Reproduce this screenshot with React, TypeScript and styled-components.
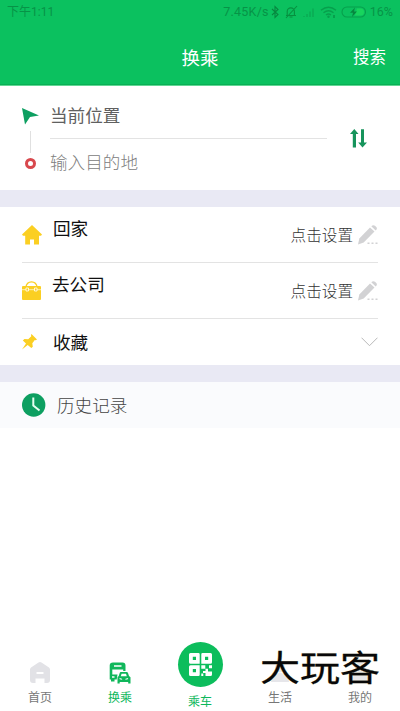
import type { ReactNode } from 'react';
import styled, { createGlobalStyle } from 'styled-components';

const GlobalStyle = createGlobalStyle`
  * {
    box-sizing: border-box;
  }
  body {
    margin: 0;
    background: #fff;
    font-family: Roboto, 'Noto Sans CJK SC', sans-serif;
  }
`;

const Screen = styled.div`
  display: flex;
  flex-direction: column;
  width: 400px;
  height: 711px;
  overflow: hidden;
  background: #fff;
`;

const Header = styled.header`
  height: 86px;
  background: #0bc15f;
  border-bottom: 1px solid #62d794;
  box-shadow: inset 0 -1px 0 #0aaf55;
`;

const StatusBar = styled.div`
  display: flex;
  align-items: center;
  justify-content: space-between;
  height: 24px;
  padding: 0 7px 0 7px;
  font-size: 12px;
  line-height: 24px;
  color: #079347;
`;

const StatusGroup = styled.div`
  display: flex;
  align-items: center;
`;

const Speed = styled.span`
  font-size: 12.5px;
  letter-spacing: 0.25px;
`;

const Percent = styled.span`
  margin-left: 3px;
  font-size: 12.5px;
`;

const TitleBar = styled.div`
  display: grid;
  grid-template-columns: 1fr auto 1fr;
  align-items: center;
  height: 66px;
  padding: 0 14px;
  color: #fff;
`;

const Title = styled.h1`
  grid-column: 2;
  margin: 3px 0 0;
  font-size: 18.5px;
  font-weight: 400;
  line-height: 28px;
`;

const SearchLink = styled.span`
  justify-self: end;
  padding-top: 2px;
  font-size: 16.5px;
  line-height: 26px;
`;

const RoutePanel = styled.section`
  display: flex;
  height: 104px;
  padding-left: 21px;
`;

const RouteMarks = styled.div`
  display: flex;
  flex-direction: column;
  align-items: center;
  width: 18px;
  padding-top: 21px;
`;

const MarkLine = styled.i`
  width: 1px;
  height: 22px;
  margin: 6px 0 5px;
  background: #e0e0e0;
`;

const Ring = styled.i`
  width: 11px;
  height: 11px;
  border: 3px solid #d8484d;
  border-radius: 50%;
`;

const RouteFields = styled.div`
  width: 277px;
  margin-left: 11px;
  padding-top: 7px;
`;

const Field = styled.div<{ $placeholder?: boolean }>`
  height: ${(p) => (p.$placeholder ? 48 : 46)}px;
  border-bottom: ${(p) => (p.$placeholder ? 'none' : '1px solid #e3e3e3')};
  font-size: 17.6px;
  font-weight: ${(p) => (p.$placeholder ? 300 : 400)};
  line-height: ${(p) => (p.$placeholder ? 48 : 46)}px;
  color: ${(p) => (p.$placeholder ? '#808080' : '#606060')};
`;

const SwapButton = styled.div`
  margin: 43px 0 0 23px;
`;

const Band = styled.div`
  height: 17px;
  background: #e9e9f4;
`;

const PlaceList = styled.section`
  height: 158px;
  padding: 0 22px;
`;

const PlaceRow = styled.div<{ $height: number; $last?: boolean }>`
  display: flex;
  align-items: center;
  height: ${(p) => p.$height}px;
  border-bottom: ${(p) => (p.$last ? 'none' : '1px solid #e3e3e3')};
`;

const PlaceIcon = styled.span`
  display: flex;
  width: 20px;
`;

const PlaceName = styled.span<{ $raised?: boolean; $gap: number }>`
  flex: 1;
  margin-left: ${(p) => p.$gap}px;
  padding-top: ${(p) => (p.$raised ? 0 : 2)}px;
  padding-bottom: ${(p) => (p.$raised ? 12 : 0)}px;
  font-size: 17.6px;
  line-height: 26px;
  color: #111;
`;

const PlaceHint = styled.span`
  margin-right: 5px;
  padding-top: 3px;
  font-size: 15.6px;
  font-weight: 300;
  line-height: 24px;
  color: #333;
`;

const HistoryBar = styled.section`
  display: flex;
  align-items: center;
  gap: 11px;
  height: 46px;
  padding-left: 22px;
  background: #fafbfd;
  font-size: 17.6px;
  font-weight: 300;
  line-height: 26px;
  color: #444;
`;

const HistoryLabel = styled.span`
  padding-top: 2px;
`;

const TabBar = styled.nav`
  position: relative;
  display: grid;
  grid-template-columns: repeat(5, 1fr);
  height: 71px;
  margin-top: auto;
`;

const Tab = styled.div<{ $active?: boolean }>`
  display: flex;
  flex-direction: column;
  align-items: center;
  justify-content: flex-end;
  padding-bottom: 4px;
  font-size: 12px;
  line-height: 18px;
  color: ${(p) => (p.$active ? '#0db75b' : '#777')};
`;

const TabIcon = styled.span`
  display: flex;
  margin-bottom: 5px;
`;

const ScanTab = styled(Tab)`
  padding-bottom: 0;
`;

const ScanDisc = styled.span`
  display: flex;
  align-items: center;
  justify-content: center;
  width: 45px;
  height: 45px;
  margin-bottom: 6px;
  border-radius: 50%;
  background: #0cbd5c;
`;

const Watermark = styled.span`
  position: absolute;
  top: 6px;
  left: 260px;
  font-size: 40px;
  font-weight: 400;
  line-height: 48px;
  color: #080808;
  transform: scaleY(0.88);
  -webkit-text-stroke: 0.3px #080808;
  text-shadow: 0 0 2px #fff7cf;
`;

const StatusIcons = () => (
  <svg width="98" height="14" viewBox="0 0 98 14" fill="none" stroke="#079f4c" strokeWidth="1.1">
    <path d="M3 4l6 5.500-3 3v-11l3 3L3 10" stroke="#07873f" />
    <path d="M17 10.500h10M18.200 10.500v-4a3.600 3.600 0 0 1 7.200 0v4M20.500 12h3M17 13L28 1" stroke="#07903f" />
    <path d="M35 12v-1M38 12V9M41 12V6.500M44 12V3.500" stroke="#0bab54" strokeWidth="1.500" />
    <path d="M52 5.200q7.500-6 15 0M54.500 7.800q5-4 10 0M57 10q2.500-2 5 0" strokeWidth="1.400" />
    <circle cx="59.500" cy="11.700" r="1.200" fill="#079f4c" stroke="none" />
    <path d="M65 10v3" strokeWidth="2" />
    <path d="M88 3.500h3.500a3.500 3.500 0 0 1 0 7H86z" fill="#18d45d" stroke="none" />
    <rect x="73" y="2" width="23.500" height="10" rx="5" />
    <path d="M86 2.500l-5 5.200h3L83 12l5-5.500h-3z" fill="#07873f" stroke="none" />
  </svg>
);

const HomeIcon = () => (
  <svg width="20" height="20" viewBox="0 0 20 20" fill="#fbcf22">
    <path d="M10 0l10 9.500-1 1.300h-2V19.500h-5v-5H8v5H3.200v-8.700H1L0 9.500z" />
  </svg>
);

const BriefcaseIcon = () => (
  <svg width="19" height="19" viewBox="0 0 19 19">
    <path d="M3.800 6.500C5-1 14-1 15.200 6.500" fill="none" stroke="#fbcf22" strokeWidth="1.400" />
    <path d="M0 6q0-1 1-1h17q1 0 1 1v12q0 1-1 1H1q-1 0-1-1z" fill="#fbcf22" />
    <path d="M0 8.700h4m2.500 0h6m2.500 0h4" stroke="#fff3b8" strokeWidth=".9" />
    <path d="M4 7h2.500v3H4zm8.500 0H15v3h-2.500z" fill="#fbcf22" stroke="#fff" strokeWidth=".8" />
    <path d="M5.800 5q3.700-3 7.400 0z" fill="#fff" />
  </svg>
);

const PinIcon = () => (
  <svg width="15" height="16" viewBox="0 0 15 16" fill="#fbcf22">
    <path d="M9.500 0L15 5.500l-1.200.7-1-.1-2.500 3.100.5 3.500-1.500 1.400L5.700 11 0 15.500 4 9.500.8 6.400l1.700-1.500 3.700.3L9.300 2.300 9 1z" />
  </svg>
);

const PencilIcon = () => (
  <svg width="20" height="20" viewBox="0 0 20 20" fill="#d2d2d4">
    <path d="M0 19.500l1.300-6L12 2.500l4.500 4L5.700 17.500z" />
    <path d="M13.300 1.300q1.700-1.800 3.700-.5l1.500 1.500q1 1.700-.8 3.200z" />
    <path d="M9.500 17.500h2v1.500h-2zm4 0h2v1.500h-2zm4 0h2v1.500h-2z" />
  </svg>
);

const ChevronIcon = () => (
  <svg width="17" height="10" viewBox="0 0 17 10" fill="none" stroke="#b8b8b8">
    <path d="M.5.700l8 8 8-8" />
  </svg>
);

const ClockIcon = () => (
  <svg width="24" height="24" viewBox="0 0 24 24" fill="none">
    <circle cx="11.700" cy="12" r="11.700" fill="#0d9f61" />
    <path d="M11.300 4.500v8l6.200 5" stroke="#e4fff0" strokeWidth="2" />
  </svg>
);

const TabHomeIcon = () => (
  <svg width="22" height="23" viewBox="0 0 22 23">
    <path d="M1 8.500Q1 7.300 2 6.500L9.500 1.500q1.500-1 3 0L20 6.500q1 .8 1 2V19q0 3-3 3h-2.500v-4.500h-9V22H4q-3 0-3-3z" fill="#e2e2e6" />
    <path d="M7.500 12h7" stroke="#fff" strokeWidth="2" />
  </svg>
);

const TransitIcon = () => (
  <svg width="22" height="22" viewBox="0 0 22 22" fill="#10b75b">
    <path
      fillRule="evenodd"
      d="M4 .5h9.500q3 0 3 3V9h-2.300V7.500H3.300v5h5.200l-.8 5H5.500v2H2v-2H.7V3.500q0-3 3.300-3zM5 3.200v1.600h7.500V3.200zM3 14.200v1.500h2.500v-1.500z"
    />
    <path
      fillRule="evenodd"
      d="M11.800 10h6q.8 0 1.200 1l1 3 1.500 1.200V21.500h-2.300V20h-8.500v1.500H8.500v-6.300L9.700 14l1-3q.3-1 1.100-1zM12.600 11.700l-.8 2.500h6l-.8-2.500zM10.500 16l.2 1.300 2.500.5-.2-1zm8.700 0l-2.700.8-.1 1 2.500-.5z"
    />
  </svg>
);

const QrIcon = () => (
  <svg width="23" height="23" viewBox="0 0 23 23" fill="#fff">
    <path
      fillRule="evenodd"
      d="M1.500 0h8q1.200 0 1.200 1.200v9.500H1.500Q0 10.700 0 9.200V1.500Q0 0 1.500 0zM3.800 3.800v3.200H7V3.800zM13.500 0h8Q23 0 23 1.500v7.700q0 1.500-1.500 1.500h-9.200V1.200Q12.300 0 13.500 0zM16 3.800v3.200h3.200V3.800zM1.500 12.300h9.200v9.500q0 1.200-1.200 1.200h-8Q0 23 0 21.500v-7.700q0-1.500 1.500-1.500zM3.800 16v3.200H7V16z"
    />
    <path d="M12.300 12.300h4v3.500h-4zM20 12.300h3v3h-3zM16.500 15.800H19v2.700h4v3q0 1.500-1.500 1.500h-5v-3H14v-2h2.500zM12.300 20.500h2V23h-2z" />
  </svg>
);

const FaintIcon = () => (
  <svg width="22" height="23" viewBox="0 0 22 23" fill="#e6e6ea">
    <circle cx="11" cy="6.500" r="5" />
    <path d="M2 21q0-9 9-9t9 9z" />
  </svg>
);

interface IPlace {
  name: string;
  icon: ReactNode;
  height: number;
  gap: number;
  hint?: string;
}

const PLACES: IPlace[] = [
  { name: '回家', icon: <HomeIcon />, height: 56, gap: 11, hint: '点击设置' },
  { name: '去公司', icon: <BriefcaseIcon />, height: 56, gap: 10, hint: '点击设置' },
  { name: '收藏', icon: <PinIcon />, height: 46, gap: 11 },
];

const App = () => {
  return (
    <Screen>
      <GlobalStyle />
      <Header>
        <StatusBar>
          <span>下午1:11</span>
          <StatusGroup>
            <Speed>7.45K/s</Speed>
            <StatusIcons />
            <Percent>16%</Percent>
          </StatusGroup>
        </StatusBar>
        <TitleBar>
          <Title>换乘</Title>
          <SearchLink>搜索</SearchLink>
        </TitleBar>
      </Header>

      <RoutePanel>
        <RouteMarks>
          <svg width="18" height="18" viewBox="0 0 18 18" fill="#0d9f61">
            <path d="M1 1l17 7.500-9 1.500L4 17.500z" />
          </svg>
          <MarkLine />
          <Ring />
        </RouteMarks>
        <RouteFields>
          <Field>当前位置</Field>
          <Field $placeholder>输入目的地</Field>
        </RouteFields>
        <SwapButton>
          <svg width="17" height="19" viewBox="0 0 17 19" fill="#17945c">
            <path d="M4.300 0L8.500 5H6v13.500H2.800V5H0z" />
            <path d="M11 .300h3v13.200h3L12.500 18.500 8.200 13.500H11z" />
          </svg>
        </SwapButton>
      </RoutePanel>

      <Band />

      <PlaceList>
        {PLACES.map((place) => (
          <PlaceRow key={place.name} $height={place.height} $last={!place.hint}>
            <PlaceIcon>{place.icon}</PlaceIcon>
            <PlaceName $gap={place.gap} $raised={!!place.hint}>
              {place.name}
            </PlaceName>
            {place.hint && <PlaceHint>{place.hint}</PlaceHint>}
            {place.hint ? <PencilIcon /> : <ChevronIcon />}
          </PlaceRow>
        ))}
      </PlaceList>

      <Band />

      <HistoryBar>
        <ClockIcon />
        <HistoryLabel>历史记录</HistoryLabel>
      </HistoryBar>

      <TabBar>
        <Tab>
          <TabIcon><TabHomeIcon /></TabIcon>
          首页
        </Tab>
        <Tab $active>
          <TabIcon><TransitIcon /></TabIcon>
          换乘
        </Tab>
        <ScanTab $active>
          <ScanDisc><QrIcon /></ScanDisc>
          乘车
        </ScanTab>
        <Tab>
          <TabIcon><FaintIcon /></TabIcon>
          生活
        </Tab>
        <Tab>
          <TabIcon><FaintIcon /></TabIcon>
          我的
        </Tab>
        <Watermark>大玩客</Watermark>
      </TabBar>
    </Screen>
  );
};

export default App;
